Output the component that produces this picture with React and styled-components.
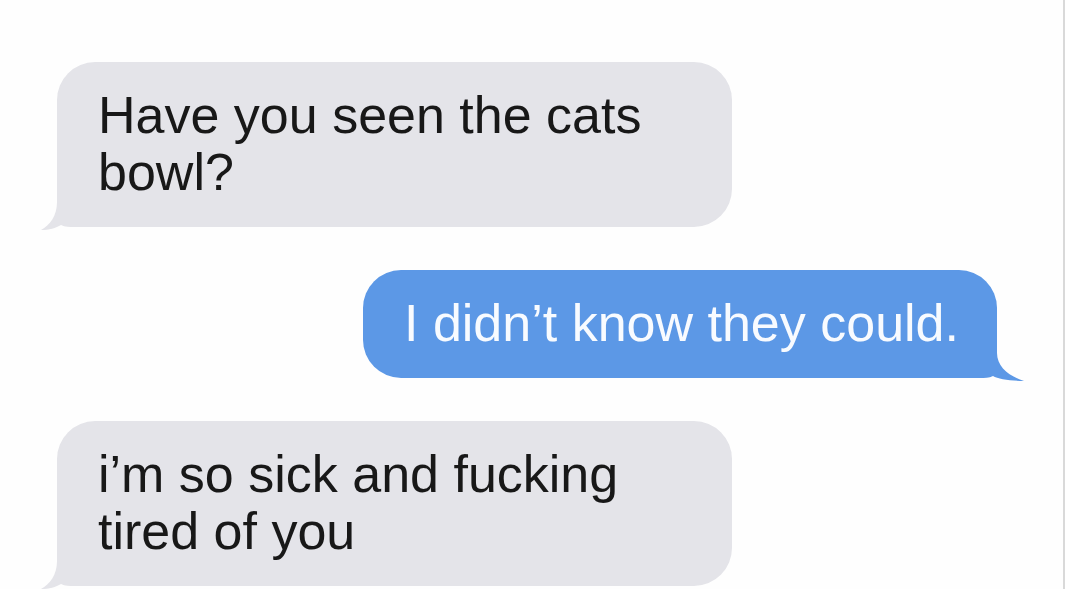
import React from "react";
import styled, { createGlobalStyle } from "styled-components";

const Global = createGlobalStyle`
html, body {
  margin: 0;
  padding: 0;
  background: #fefefe;
}
#root {
  height: 589px;
  overflow: hidden;
}
`

const Screen = styled.div`
display: flex;
height: 589px;
background: #fefefe;
`

const Thread = styled.div`
flex: 1;
display: flex;
flex-direction: column;
gap: 43px;
padding: 62px 66px 0 57px;
`

const Divider = styled.div`
width: 2px;
background: #d9d9d9;
`

const Gutter = styled.div`
width: 15px;
background: #ffffff;
`

const Row = styled.div`
display: flex;
justify-content: ${(p) => (p.$mine ? "flex-end" : "flex-start")};
`

const Bubble = styled.div`
position: relative;
max-width: ${(p) => (p.$mine ? "none" : "675px")};
box-sizing: border-box;
padding: 25px 38px 26px 41px;
border-radius: 38px;
${(p) =>
  p.$mine ? "border-bottom-right-radius: 18px;" : "border-bottom-left-radius: 18px;"}
background: ${(p) => (p.$mine ? "#5c98e6" : "#e4e4e9")};
color: ${(p) => (p.$mine ? "#f8fbff" : "#181818")};
font-family: "Liberation Sans", Arial, sans-serif;
font-size: 52px;
line-height: 57px;
`

const TailSvg = styled.svg`
position: absolute;
bottom: -3px;
${(p) => (p.$mine ? `right: -${p.$reach}px;` : `left: -${p.$reach}px;`)}
height: 44px;
`

function Tail({ mine }) {
  const fill = mine ? "#5c98e6" : "#e4e4e9";
  const r = mine ? 27 : 16;
  const w = r + 18;
  // drawn for the left side, mirrored for the right
  const d = `M${r} 0 V16 C${r} 30 ${r * 0.55} 39 0 44 C${r * 0.5} 44 ${r - 1} 42 ${r + 4} 39 C${r + 8} 41 ${r + 12} 41 ${w} 41 L${w} 0 Z`;
  return (
    <TailSvg $mine={mine} $reach={r} width={w} viewBox={`0 0 ${w} 44`}>
      <g transform={mine ? `translate(${w} 0) scale(-1 1)` : undefined}>
        <path d={d} fill={fill} />
      </g>
    </TailSvg>
  );
}

function Message({ mine, children }) {
  return (
    <Row $mine={mine}>
      <Bubble $mine={mine}>
        {children}
        <Tail mine={mine} />
      </Bubble>
    </Row>
  );
}

const Text = styled.span`
position: relative;
z-index: 1;
`

export default function App() {
  return (
    <>
      <Global />
      <Screen>
        <Thread>
          <Message><Text>Have you seen the cats bowl?</Text></Message>
          <Message mine><Text>I didn’t know they could.</Text></Message>
          <Message><Text>i’m so sick and fucking tired of you</Text></Message>
        </Thread>
        <Divider />
        <Gutter />
      </Screen>
    </>
  );
}
